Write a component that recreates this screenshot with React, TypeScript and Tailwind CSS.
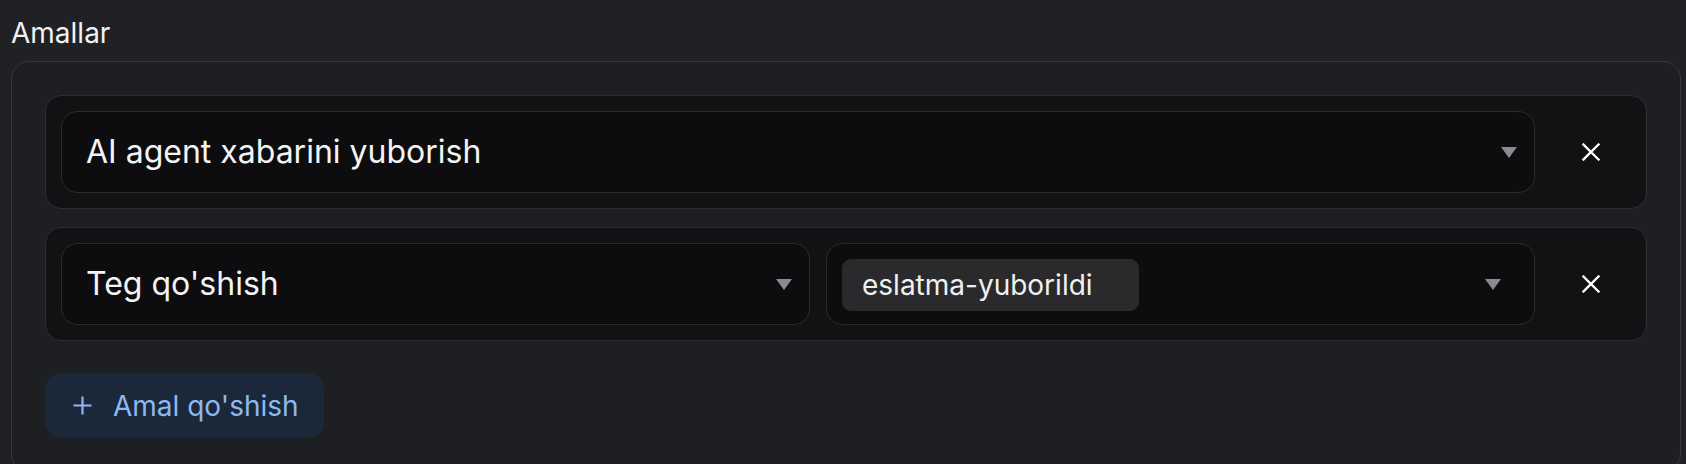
import React from "react";

function Caret() {
  return (
    <svg width="16" height="11" viewBox="0 0 16 11" className="shrink-0">
      <path d="M0 0 H16 L8 11 Z" fill="#8b8b8f" />
    </svg>
  );
}

function CloseBtn() {
  return (
    <button className="w-[80px] h-[82px] shrink-0 flex items-center justify-center">
      <svg width="18" height="18" viewBox="0 0 18 18">
        <path d="M1.5 1.5 L16.5 16.5 M16.5 1.5 L1.5 16.5" stroke="#ffffff" strokeWidth="2.3" strokeLinecap="square" />
      </svg>
    </button>
  );
}

export default function App() {
  return (
    <div className="min-h-screen bg-[#202125] pl-[11px] pr-[5px] pt-[19px] font-['Inter','Noto_Sans',sans-serif] text-white">
      <div className="text-[28px] leading-[28px] text-[#f2f2f3] mb-[14px]">Amallar</div>
      <div className="rounded-[18px] border border-[#37383c] bg-[#1e1f23] px-[33px] pt-[33px] pb-[33px]">
        <div className="flex flex-col gap-[18px]">
          {/* Row 1 */}
          <div className="flex items-center gap-[16px] rounded-[16px] border border-[#2e2e31] bg-[#121214] p-[15px]">
            <div className="flex-1 h-[82px] flex items-center justify-between rounded-[16px] border border-[#2b2b2e] bg-[#0d0d0f] pl-[24px] pr-[17px]">
              <span className="text-[32px] text-[#f4f4f5]">AI agent xabarini yuborish</span>
              <Caret />
            </div>
            <CloseBtn />
          </div>
          {/* Row 2 */}
          <div className="flex items-center gap-[16px] rounded-[16px] border border-[#2e2e31] bg-[#121214] p-[15px]">
            <div className="w-[749px] shrink-0 h-[82px] flex items-center justify-between rounded-[16px] border border-[#2b2b2e] bg-[#0d0d0f] pl-[24px] pr-[17px]">
              <span className="text-[32px] text-[#f4f4f5]">Teg qo'shish</span>
              <Caret />
            </div>
            <div className="flex-1 h-[82px] flex items-center justify-between rounded-[16px] border border-[#2b2b2e] bg-[#0d0d0f] pl-[15px] pr-[33px]">
              <span className="self-start mt-[15px] w-[297px] h-[52px] flex items-center rounded-[9px] bg-[#2a2a2d] pl-[20px] text-[28px] text-[#f0f0f1]">
                eslatma-yuborildi
              </span>
              <Caret />
            </div>
            <CloseBtn />
          </div>
        </div>
        <button className="mt-[32px] h-[65px] flex items-center rounded-[16px] bg-[#1b283a] pl-[28px] pr-[25px] text-[28px] text-[#8db8f2]">
          <svg width="19" height="19" viewBox="0 0 19 19" className="mr-[21px]">
            <path d="M9.5 0.5 V18.5 M0.5 9.5 H18.5" stroke="#8db8f2" strokeWidth="2.2" />
          </svg>
          Amal qo'shish
        </button>
      </div>
    </div>
  );
}
